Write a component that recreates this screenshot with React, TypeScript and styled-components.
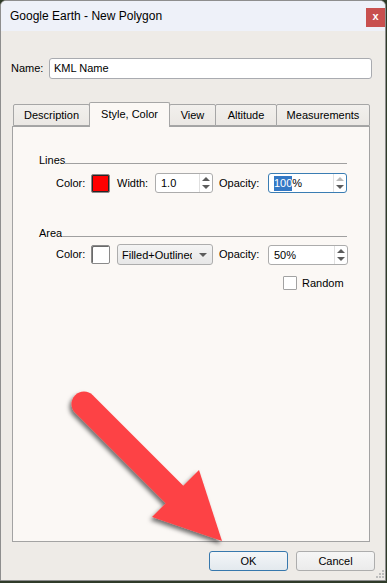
import React from "react";
import styled, { createGlobalStyle } from "styled-components";

const GlobalStyle = createGlobalStyle`
  html, body { margin: 0; padding: 0; background: #2f3b29; }
  body {
    font-family: "Liberation Sans", Arial, sans-serif;
    font-size: 11px;
    color: #000;
  }
  #root { width: 387px; height: 583px; overflow: hidden; }
`;

const Window = styled.div`
  position: relative;
  box-sizing: border-box;
  width: 386px;
  height: 581px;
  background: #eeebe7;
  border: 1px solid #8e8e8e;
  border-radius: 6px 6px 0 0;
  display: flex;
  flex-direction: column;
  overflow: hidden;
`;

const TitleBar = styled.div`
  flex-shrink: 0;
  height: 30px;
  background: #eef1f9;
  display: flex;
  align-items: flex-start;
  justify-content: space-between;
`;

const Title = styled.div`
  margin: 8px 0 0 9px;
  font-size: 12px;
  line-height: 14px;
`;

const CloseButton = styled.div`
  margin-top: 7px;
  width: 19px;
  height: 19px;
  background: #c8504f;
  color: #fff;
  font-weight: bold;
  font-size: 11px;
  line-height: 17px;
  text-align: center;
`;

const NameRow = styled.div`
  display: flex;
  align-items: center;
  margin: 27px 0 0 10px;
`;

const Label = styled.span<{ $w?: number }>`
  flex-shrink: 0;
  width: ${(p) => (p.$w ? `${p.$w}px` : "auto")};
  white-space: nowrap;
  line-height: 13px;
`;

const TextInput = styled.div`
  box-sizing: border-box;
  width: 323px;
  height: 21px;
  padding-left: 4px;
  line-height: 19px;
  background: #fff;
  border: 1px solid #a9abb0;
  border-radius: 3px;
`;

const TabBar = styled.div`
  position: relative;
  z-index: 1;
  display: flex;
  align-items: flex-end;
  height: 24px;
  margin: 23px 0 0 12px;
`;

const Tab = styled.div<{ $w: number; $active?: boolean }>`
  box-sizing: border-box;
  width: ${(p) => p.$w}px;
  height: ${(p) => (p.$active ? 25 : 22)}px;
  margin-bottom: ${(p) => (p.$active ? -1 : 0)}px;
  margin-left: -1px;
  &:first-child { margin-left: 0; }
  position: relative;
  z-index: ${(p) => (p.$active ? 2 : 1)};
  display: flex;
  align-items: center;
  justify-content: center;
  padding-bottom: ${(p) => (p.$active ? 2 : 0)}px;
  border: 1px solid #a6a6a6;
  border-bottom: ${(p) => (p.$active ? "none" : "1px solid #a6a6a6")};
  border-radius: 2px 2px 0 0;
  background: ${(p) => (p.$active ? "#fbf8f5" : "linear-gradient(#f2f0ed, #ebe8e4)")};
  white-space: nowrap;
`;

const Panel = styled.div`
  box-sizing: border-box;
  width: 358px;
  height: 416px;
  margin-left: 11px;
  padding: 27px 22px 0 26px;
  background: #fbf8f5;
  border: 1px solid #a3a3a3;
  display: flex;
  flex-direction: column;
`;

const GroupHeading = styled.div<{ $top?: number }>`
  display: flex;
  height: 13px;
  margin-top: ${(p) => p.$top ?? 0}px;
`;

const HeadingRule = styled.div`
  flex: 1;
  align-self: flex-end;
  height: 1px;
  margin-bottom: 3px;
  background: #a0a0a0;
`;

const FieldRow = styled.div<{ $top: number; $h: number }>`
  display: flex;
  align-items: center;
  height: ${(p) => p.$h}px;
  margin: ${(p) => p.$top}px 0 0 17px;
`;

const Swatch = styled.div<{ $color: string; $dark?: boolean }>`
  box-sizing: border-box;
  flex-shrink: 0;
  width: 19px;
  height: 19px;
  margin-right: 7px;
  background: ${(p) => p.$color};
  border: 1px solid #8a8a8a;
  border-radius: 2px;
  box-shadow: ${(p) => (p.$dark ? "inset 0 0 0 1px #262626" : "inset 1px 1px 0 #6a6a6a")};
`;

const SpinFrame = styled.div<{ $w: number; $focus?: boolean; $gap?: number }>`
  box-sizing: border-box;
  flex-shrink: 0;
  width: ${(p) => p.$w}px;
  height: 20px;
  margin-right: ${(p) => p.$gap ?? 0}px;
  display: flex;
  background: #fff;
  border: 1px solid ${(p) => (p.$focus ? "#3a7db3" : "#acacac")};
  border-radius: 3px;
`;

const SpinText = styled.div`
  flex: 1;
  padding-left: 5px;
  line-height: 18px;
  white-space: nowrap;
  overflow: hidden;
`;

const Selected = styled.span`
  background: #3378c5;
  color: #fff;
  display: inline-block;
  line-height: 15px;
`;

const SpinButtons = styled.div`
  width: 12px;
  border-left: 1px solid #e0e0e0;
  display: flex;
  flex-direction: column;
  align-items: center;
  justify-content: center;
  gap: 4px;
`;

const Triangle = styled.div<{ $up?: boolean; $dim?: boolean; $size?: number }>`
  width: 0;
  height: 0;
  border-left: ${(p) => p.$size ?? 4}px solid transparent;
  border-right: ${(p) => p.$size ?? 4}px solid transparent;
  ${(p) =>
    p.$up
      ? `border-bottom: 4px solid ${p.$dim ? "#b9b9b9" : "#5c5c5c"};`
      : `border-top: 4px solid ${p.$dim ? "#b9b9b9" : "#5c5c5c"};`}
`;

const Select = styled.div`
  box-sizing: border-box;
  flex-shrink: 0;
  width: 96px;
  height: 21px;
  margin-right: 6px;
  padding-left: 4px;
  display: flex;
  align-items: center;
  background: linear-gradient(#f4f4f4, #e7e7e7);
  border: 1px solid #adadad;
  border-radius: 3px;
`;

const SelectText = styled.span`
  width: 70px;
  overflow: hidden;
  white-space: nowrap;
  margin-right: 7px;
`;

const CheckRow = styled.div`
  display: flex;
  align-items: center;
  gap: 5px;
  margin: 11px 0 0 244px;
`;

const CheckBox = styled.div`
  box-sizing: border-box;
  width: 14px;
  height: 14px;
  background: #fff;
  border: 1px solid #a2a2a2;
  border-radius: 1px;
`;

const ButtonRow = styled.div`
  display: flex;
  justify-content: flex-end;
  gap: 8px;
  margin: 9px 10px 0 0;
`;

const Button = styled.div<{ $default?: boolean }>`
  box-sizing: border-box;
  width: 79px;
  height: 20px;
  display: flex;
  align-items: center;
  justify-content: center;
  border: 1px solid ${(p) => (p.$default ? "#3778ad" : "#adadad")};
  border-radius: 3px;
  background: ${(p) =>
    p.$default ? "linear-gradient(#f4f6f8, #e3e9ee)" : "linear-gradient(#f6f6f6, #ebebeb)"};
`;

const Grip = styled.svg`
  position: absolute;
  right: 1px;
  bottom: 1px;
`;

const ArrowOverlay = styled.svg`
  position: absolute;
  left: 59px;
  top: 384px;
  overflow: visible;
  pointer-events: none;
`;

function SpinBox(props: { w: number; value: React.ReactNode; focus?: boolean; upDim?: boolean; gap?: number }) {
  return (
    <SpinFrame $w={props.w} $focus={props.focus} $gap={props.gap}>
      <SpinText>{props.value}</SpinText>
      <SpinButtons>
        <Triangle $up $dim={props.upDim} />
        <Triangle />
      </SpinButtons>
    </SpinFrame>
  );
}

const tabs = [
  { label: "Description", w: 77 },
  { label: "Style, Color", w: 81, active: true },
  { label: "View", w: 47 },
  { label: "Altitude", w: 62 },
  { label: "Measurements", w: 94 },
];

export default function App() {
  return (
    <>
      <GlobalStyle />
      <Window>
        <TitleBar>
          <Title>Google Earth - New Polygon</Title>
          <CloseButton>x</CloseButton>
        </TitleBar>

        <NameRow>
          <Label $w={38}>Name:</Label>
          <TextInput>KML Name</TextInput>
        </NameRow>

        <TabBar>
          {tabs.map((t) => (
            <Tab key={t.label} $w={t.w} $active={t.active}>
              {t.label}
            </Tab>
          ))}
        </TabBar>

        <Panel>
          <GroupHeading>
            <Label>Lines</Label>
            <HeadingRule />
          </GroupHeading>
          <FieldRow $top={6} $h={20}>
            <Label $w={35}>Color:</Label>
            <Swatch $color="#ff0000" $dark />
            <Label $w={38}>Width:</Label>
            <SpinBox w={58} value="1.0" gap={6} />
            <Label $w={49}>Opacity:</Label>
            <SpinBox
              w={79}
              focus
              upDim
              value={
                <>
                  <Selected>100</Selected>%
                </>
              }
            />
          </FieldRow>

          <GroupHeading $top={34}>
            <Label>Area</Label>
            <HeadingRule />
          </GroupHeading>
          <FieldRow $top={4} $h={21}>
            <Label $w={35}>Color:</Label>
            <Swatch $color="#ffffff" />
            <Select>
              <SelectText>Filled+Outlined</SelectText>
              <Triangle />
            </Select>
            <Label $w={49}>Opacity:</Label>
            <SpinBox w={80} value="50%" />
          </FieldRow>
          <CheckRow>
            <CheckBox />
            <Label>Random</Label>
          </CheckRow>
        </Panel>

        <ButtonRow>
          <Button $default>OK</Button>
          <Button>Cancel</Button>
        </ButtonRow>

        <Grip width="10" height="10" viewBox="0 0 10 10">
          {[
            [8, 0],
            [5, 3],
            [8, 3],
            [2, 6],
            [5, 6],
            [8, 6],
          ].map(([x, y]) => (
            <rect key={`${x}-${y}`} x={x} y={y + 1} width="2" height="2" fill="#bdbdbd" />
          ))}
        </Grip>

        <ArrowOverlay width="180" height="170" viewBox="0 0 180 170">
          <defs>
            <filter id="arrowShadow" x="-20%" y="-20%" width="140%" height="140%">
              <feDropShadow dx="-2" dy="3" stdDeviation="2" floodColor="#000" floodOpacity="0.55" />
            </filter>
          </defs>
          <g filter="url(#arrowShadow)" fill="#fd4345" stroke="none">
            <line x1="24" y1="19" x2="118" y2="113" stroke="#fd4345" strokeWidth="25" strokeLinecap="round" />
            <polygon points="139,85 92,132 162,156" />
          </g>
        </ArrowOverlay>
      </Window>
    </>
  );
}
